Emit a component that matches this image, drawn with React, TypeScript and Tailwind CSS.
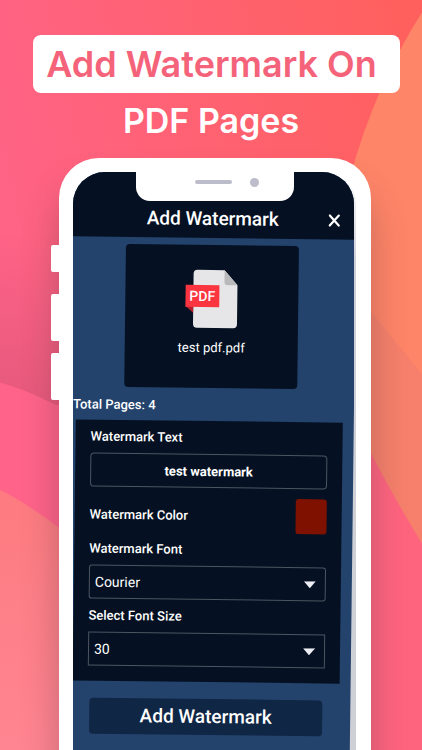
import { useState } from 'react'

const FRAME = 'relative ml-[59px] mr-[51px] mt-[12px] flex-1 rounded-t-[40px] bg-white pl-[14px] pr-[15px] pt-[14px] shadow-[0_30px_36px_rgba(70,50,60,0.32)]'

function Backdrop() {
    return (
        <svg
            className="absolute inset-0 h-full w-full"
            viewBox="0 0 422 750"
            preserveAspectRatio="none"
            aria-hidden="true"
        >
            <defs>
                <linearGradient id="base" x1="0" y1="0.4" x2="1" y2="0">
                    <stop offset="0" stopColor="#ff6388" />
                    <stop offset="1" stopColor="#ff605c" />
                </linearGradient>
                <linearGradient id="coral" x1="0" y1="0" x2="0" y2="1">
                    <stop offset="0" stopColor="#fd7b80" />
                    <stop offset="1" stopColor="#ff8592" />
                </linearGradient>
                <linearGradient id="shade" x1="0" y1="0" x2="0" y2="1">
                    <stop offset="0" stopColor="#803050" stopOpacity="0" />
                    <stop offset="1" stopColor="#803050" stopOpacity="0.2" />
                </linearGradient>
            </defs>
            <rect width="422" height="750" fill="url(#base)" />
            <rect y="230" width="200" height="170" fill="url(#shade)" />
            <path d="M422 12 Q375 85 350 175 V480 H422 Z" fill="#ff8568" />
            <path d="M350 282 L422 370 V560 H350 Z" fill="#f6806b" />
            <path d="M0 378 Q40 388 100 426 V750 H0 Z" fill="#ff6389" />
            <path d="M0 484 Q30 498 100 552 V750 H0 Z" fill="url(#coral)" />
            <path d="M350 408 Q390 486 422 537 V750 H350 Z" fill="#ff647f" />
        </svg>
    )
}

function PdfIcon() {
    return (
        <svg className="h-[60px] w-[54px]" viewBox="0 0 54 60" aria-hidden="true">
            <path d="M12 1 H39 L52 16 V55 Q52 59 48 59 H12 Q8 59 8 55 V5 Q8 1 12 1 Z" fill="#e6e6e8" />
            <path d="M39 1 L52 16 H42 Q39 16 39 13 Z" fill="#b9b9bb" />
            <path d="M0 37 H8 V44 Z" fill="#b5202c" />
            <rect x="0" y="16" width="34" height="22" fill="#fa353f" />
            <text
                x="17"
                y="32"
                textAnchor="middle"
                fill="#fff"
                className="font-['Roboto',sans-serif] text-[14px] font-medium"
            >
                PDF
            </text>
        </svg>
    )
}

function Caret() {
    return (
        <svg className="pointer-events-none absolute right-[10px] top-[14px] h-[7px] w-[12px]" viewBox="0 0 12 7" aria-hidden="true">
            <path d="M0 0 H12 L6 7 Z" fill="#eceef3" />
        </svg>
    )
}

export default function App() {
    const [text, setText] = useState('test watermark')
    const [font, setFont] = useState('Courier')
    const [size, setSize] = useState('30')

    return (
        <main className="relative flex min-h-screen flex-col overflow-hidden font-['Roboto','Liberation_Sans',sans-serif]">
            <Backdrop />

            <h1 className="relative mt-[35px] text-center font-['Inter',sans-serif] font-semibold text-white">
                <span className="ml-[33px] mr-[22px] block whitespace-nowrap rounded-lg bg-white pr-[10px] text-[36px] leading-[58px] text-[#f4637a]">
                    Add Watermark On
                </span>
                <span className="mt-[3px] block text-[34px] leading-[50px]">PDF Pages</span>
            </h1>

            <div className={FRAME}>
                {/* Side buttons */}
                <div className="absolute -left-2 top-[87px] h-[27px] w-2 rounded-l-xs bg-white" />
                <div className="absolute -left-2 top-[136px] h-[47px] w-2 rounded-l-xs bg-white" />
                <div className="absolute -left-2 top-[195px] h-[47px] w-2 rounded-l-xs bg-white" />

                <div className="h-full rounded-t-[32px] bg-linear-to-b from-white to-[#cfcfd6] to-15% pr-[2px]">
                    <div className="h-full overflow-hidden rounded-t-[32px]">
                        {/* Screen, tilted slightly inside the frame */}
                        <div className="-ml-3 -mr-[3px] -mt-3 origin-top rotate-[0.7deg] bg-[#23436d] pb-6 text-white">
                            <header className="flex h-[78px] items-start justify-between bg-[#051122] pl-[21px] pr-[12px] pt-[45px]">
                                <span className="w-5" />
                                <h2 className="text-[19px] font-medium leading-[28px]">Add Watermark</h2>
                                <button type="button" aria-label="Close" className="mt-[7px] flex w-5 justify-center">
                                    <svg className="h-[14px] w-[12px]" viewBox="0 0 12 14" aria-hidden="true">
                                        <path d="M1.5 2 L10.5 12 M10.5 2 L1.5 12" stroke="#fff" strokeWidth="2.2" strokeLinecap="round" />
                                    </svg>
                                </button>
                            </header>

                            <div className="pl-3 pr-[3px]">
                                <div className="mx-auto mt-[7px] flex h-[143px] w-[173px] flex-col items-center rounded-[4px] bg-[#051122] pt-[24px]">
                                    <PdfIcon />
                                    <p className="mt-[10px] text-[13px] leading-[18px]">test pdf.pdf</p>
                                </div>

                                <p className="pb-[5px] pl-[3px] pt-[7px] text-[13px] font-medium leading-[21px]">Total Pages: 4</p>

                                <form className="ml-[6px] mr-[8px] bg-[#051122] px-[15px] pb-[15px] pt-[7px] text-[13px] font-medium">
                                    <label htmlFor="wm-text" className="block leading-[20px]">Watermark Text</label>
                                    <input
                                        id="wm-text"
                                        value={text}
                                        onChange={(e) => setText(e.target.value)}
                                        className="mt-[6px] block h-[34px] w-full rounded-[4px] border border-[#4c5561] text-center text-[13px] font-bold"
                                    />

                                    <div className="mt-[10px] flex h-[35px] items-center justify-between">
                                        <label htmlFor="wm-color">Watermark Color</label>
                                        <button id="wm-color" type="button" aria-label="Watermark Color" className="h-[35px] w-[31px] rounded-[3px] bg-[#7f1100]" />
                                    </div>

                                    <label htmlFor="wm-font" className="mt-[7px] block leading-[20px]">Watermark Font</label>
                                    <div className="relative mt-[6px]">
                                        <select
                                            id="wm-font"
                                            value={font}
                                            onChange={(e) => setFont(e.target.value)}
                                            className="block h-[34px] w-full appearance-none rounded-[3px] border border-[#4c5561] pl-[5px] text-[14px] font-normal"
                                        >
                                            <option>Courier</option>
                                        </select>
                                        <Caret />
                                    </div>

                                    <label htmlFor="wm-size" className="mt-[7px] block leading-[20px]">Select Font Size</label>
                                    <div className="relative mt-[6px]">
                                        <select
                                            id="wm-size"
                                            value={size}
                                            onChange={(e) => setSize(e.target.value)}
                                            className="block h-[34px] w-full appearance-none border border-[#4c5561] pl-[5px] text-[14px] font-normal"
                                        >
                                            <option>30</option>
                                        </select>
                                        <Caret />
                                    </div>
                                </form>

                                <div className="pl-[23px] pr-[25px] pt-[17px]">
                                    <button type="button" className="h-[36px] w-full rounded-[4px] bg-[#102645] text-[19px] font-medium">
                                        Add Watermark
                                    </button>
                                </div>
                            </div>
                        </div>
                    </div>
                </div>

                {/* Notch with speaker and camera */}
                <div className="absolute inset-x-[77px] top-[10px] flex h-[33px] items-center justify-end rounded-b-[14px] bg-white pb-[5px] pr-[35px]">
                    <div className="mr-[18px] h-[4px] w-[37px] rounded-full bg-[#bdbcca]" />
                    <div className="h-[9px] w-[9px] rounded-full bg-[#bdbcca]" />
                </div>
            </div>
        </main>
    )
}
